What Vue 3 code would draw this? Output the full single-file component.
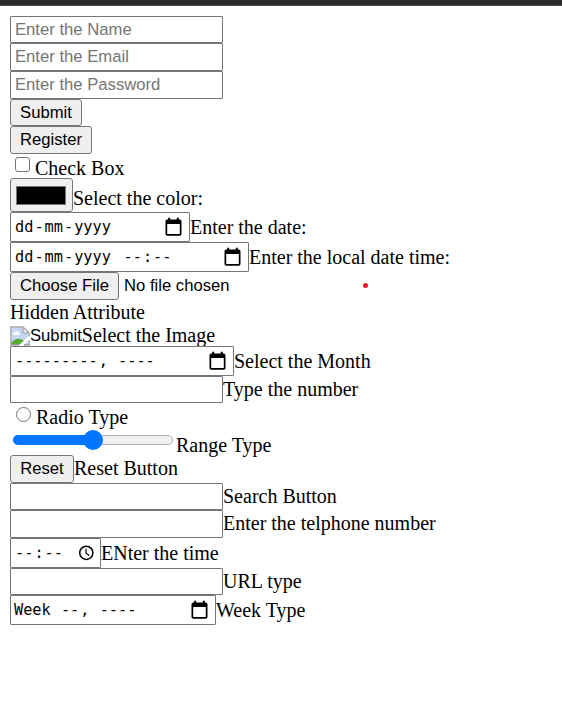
<script setup>
import { h } from 'vue'

const CalendarIcon = () =>
  h('svg', { viewBox: '0 0 18 20', width: 18, height: 20 }, [
    h('path', {
      d: 'M3.2 .8h2v1.7h6.6V.8h2v1.7h.9A1.8 1.8 0 0 1 16.5 4.3V16.9a1.8 1.8 0 0 1-1.8 1.8H2.3A1.8 1.8 0 0 1 .5 16.9V4.3A1.8 1.8 0 0 1 2.3 2.5h.9zM2.2 6.9V17h12.6V6.9z',
      fill: '#000',
      'fill-rule': 'evenodd',
    }),
  ])

const rows = [
  { type: 'text', hint: 'Enter the Name', size: 'h27' },
  { type: 'text', hint: 'Enter the Email', size: 'h28' },
  { type: 'text', hint: 'Enter the Password', size: 'h28' },
  { type: 'button', text: 'Submit', size: 'h27', width: 'w-submit' },
  { type: 'button', text: 'Register', size: 'h28', width: 'w-register' },
  { type: 'checkbox', label: 'Check Box', size: 'h24', drop: 'd2' },
  { type: 'color', label: 'Select the color:', size: 'h34', drop: 'd8' },
  { type: 'picker', parts: ['dd', '-', 'mm', '-', 'yyyy'], label: 'Enter the date:', size: 'h30', width: 'w-date', drop: 'd3' },
  { type: 'picker', parts: ['dd', '-', 'mm', '-', 'yyyy', ' ', '--', ':', '--'], label: 'Enter the local date time:', size: 'h30', width: 'w-local', drop: 'd3' },
  { type: 'file', size: 'h28' },
  { type: 'none', label: 'Hidden Attribute', size: 'h25', drop: 'd0' },
  { type: 'image', label: 'Select the Image', size: 'h21', drop: 'up2' },
  { type: 'picker', parts: ['---------', ', ', '----'], label: 'Select the Month', size: 'h30', width: 'w-month', drop: 'd3' },
  { type: 'text', label: 'Type the number', size: 'h27', drop: 'd1' },
  { type: 'radio', label: 'Radio Type', size: 'h27', drop: 'd2' },
  { type: 'range', label: 'Range Type', size: 'h25', drop: 'd3' },
  { type: 'button', text: 'Reset', label: 'Reset Button', size: 'h28', width: 'w-reset', drop: 'd1' },
  { type: 'text', label: 'Search Button', size: 'h27', drop: 'd1' },
  { type: 'text', label: 'Enter the telphone number', size: 'h28', drop: 'd1' },
  { type: 'time', parts: ['--', ':', '--'], label: 'ENter the time', size: 'h30', width: 'w-time', drop: 'd3' },
  { type: 'text', label: 'URL type', size: 'h27', drop: 'd1' },
  { type: 'picker', parts: ['Week ', '--', ', ', '----'], label: 'Week Type', size: 'h30', width: 'w-week', drop: 'd3' },
]

const isField = (part) => /^(dd|mm|yyyy|-{2,})$/.test(part)
</script>

<template>
  <main class="page">
    <div class="topbar"></div>
    <form class="form" @submit.prevent>
      <div v-for="(row, i) in rows" :key="i" class="row" :class="row.size">
        <input v-if="row.type === 'text'" class="box text" type="text" :placeholder="row.hint" />
        <button v-else-if="row.type === 'button'" type="button" class="btn" :class="row.width">{{ row.text }}</button>
        <span v-else-if="row.type === 'checkbox'" class="check"></span>
        <span v-else-if="row.type === 'radio'" class="radio"></span>
        <span v-else-if="row.type === 'color'" class="btn color"><span class="swatch"></span></span>
        <template v-else-if="row.type === 'file'">
          <button type="button" class="btn w-file">Choose File</button>
          <span class="filename">No file chosen</span>
        </template>
        <template v-else-if="row.type === 'image'">
          <svg class="broken" viewBox="0 0 20 20" width="20" height="20">
            <path d="M1 1h12l6 6v12H1z" fill="#c5d7f5" />
            <path d="M3 9c-1-2 1-3 2-3 1-2 4-1 4 1 1 0 1 2 0 2z" fill="#fff" />
            <path d="M1 19v-2c2-3 6-5 9-4 3 0 5 2 6 6z" fill="#57ad35" />
            <path d="M8 20 20 9v4l-7 7z" fill="#fff" />
            <path d="M13 1v6h6z" fill="#eee" stroke="#999" />
            <path d="M9 19H.8V.8H13L19.2 7v3M14 19h5.2v-5" fill="none" stroke="#a5a5a5" stroke-width="1.3" />
          </svg>
          <span class="alt">Submit</span>
        </template>
        <span v-else-if="row.type === 'range'" class="range"><span class="fill"></span><span class="thumb"></span></span>
        <span v-else-if="row.type === 'picker' || row.type === 'time'" class="box picker" :class="row.width">
          <span class="parts"><span v-for="(part, j) in row.parts" :key="j" :class="{ field: isField(part), gap: part === ' ' }">{{ part }}</span></span>
          <CalendarIcon v-if="row.type === 'picker'" />
          <svg v-else viewBox="0 0 16 16" width="16" height="16">
            <circle cx="8.3" cy="7.8" r="6.6" fill="none" stroke="#000" stroke-width="1.5" />
            <path d="M8 3.8v4.4l3.3 2.2" fill="none" stroke="#000" stroke-width="1.2" />
          </svg>
        </span>
        <label v-if="row.label" class="label" :class="row.drop">{{ row.label }}</label>
      </div>
    </form>
    <span class="dot"></span>
  </main>
</template>

<style>
body {
  margin: 0;
  background: #fff;
}
</style>

<style scoped>
.page {
  position: relative;
  height: 725px;
  overflow: hidden;
  background: #fff;
  color: #000;
  font: 20px/22px 'Liberation Serif', serif;
}
.topbar {
  box-sizing: border-box;
  height: 6px;
  background: #2b2b2b;
  border-bottom: 1px solid #4b4b4b;
}
.form {
  padding: 10px 10px 0;
}
.row {
  display: flex;
  align-items: flex-start;
  white-space: nowrap;
}
.label {
  padding-top: 1px;
}
.h21 { height: 21px; }
.h24 { height: 24px; }
.h25 { height: 25px; }
.h27 { height: 27px; }
.h28 { height: 28px; }
.h30 { height: 30px; }
.h34 { height: 34px; }
.d0 { margin-top: 0; }
.d1 { margin-top: 1px; }
.d2 { margin-top: 2px; }
.d3 { margin-top: 3px; }
.d8 { margin-top: 8px; }
.up2 { margin-top: -2px; }
.box,
.btn {
  box-sizing: border-box;
  flex: none;
  height: 100%;
  margin: 0;
  border: 1px solid #767676;
}
.box {
  border-radius: 1px;
  background: #fff;
}
.text {
  width: 213px;
  padding: 0 4px;
  outline: 0;
  font: 16.67px 'Liberation Sans', sans-serif;
}
.text::placeholder {
  color: #757575;
  opacity: 1;
}
.btn {
  padding: 0;
  border-radius: 3px;
  background: #efefef;
  color: #000;
  font: 16.67px/24px 'Liberation Sans', sans-serif;
  text-align: center;
}
.w-submit { width: 72px; }
.w-register { width: 82px; }
.w-file { width: 109px; }
.w-reset { width: 64px; }
.w-date { width: 180px; }
.w-local { width: 239px; }
.w-month { width: 224px; }
.w-time { width: 91px; }
.w-week { width: 206px; }
.check,
.radio {
  box-sizing: border-box;
  width: 15px;
  height: 15px;
  border: 1px solid #767676;
}
.check {
  margin: 3px 5px 0;
  border-radius: 3px;
}
.radio {
  margin: 4px 5px 0 6px;
  border-radius: 50%;
}
.color {
  display: flex;
  width: 63px;
  padding: 7px 6px 6px 5px;
}
.swatch {
  box-sizing: border-box;
  width: 50px;
  height: 19px;
  border: 1px solid #777;
  background: #000;
}
.filename {
  margin-left: 5px;
  font: 16.67px/27px 'Liberation Sans', sans-serif;
}
.broken {
  flex: none;
  margin-top: 1px;
}
.alt {
  font: 16.67px/21px 'Liberation Sans', sans-serif;
}
.picker {
  display: flex;
  align-items: center;
  justify-content: space-between;
  padding: 0 6px 0 3px;
  font: 15.25px/22px 'DejaVu Sans Mono', monospace;
}
.parts {
  white-space: pre;
}
.field {
  padding: 0 1px;
}
.gap {
  padding-right: 1.5px;
}
.range {
  position: relative;
  box-sizing: border-box;
  width: 160px;
  height: 10px;
  margin: 5px 3px 0;
  border: 1px solid #b2b2b2;
  border-radius: 5px;
  background: #efefef;
}
.fill {
  position: absolute;
  inset: -1px 50% -1px -1px;
  border-radius: 5px 0 0 5px;
  background: #0075ff;
}
.thumb {
  position: absolute;
  top: -6px;
  left: 69px;
  width: 20px;
  height: 20px;
  border-radius: 50%;
  background: #0075ff;
}
.dot {
  position: absolute;
  top: 283px;
  left: 363px;
  width: 5px;
  height: 5px;
  border-radius: 50%;
  background: #ed1c24;
}
</style>
